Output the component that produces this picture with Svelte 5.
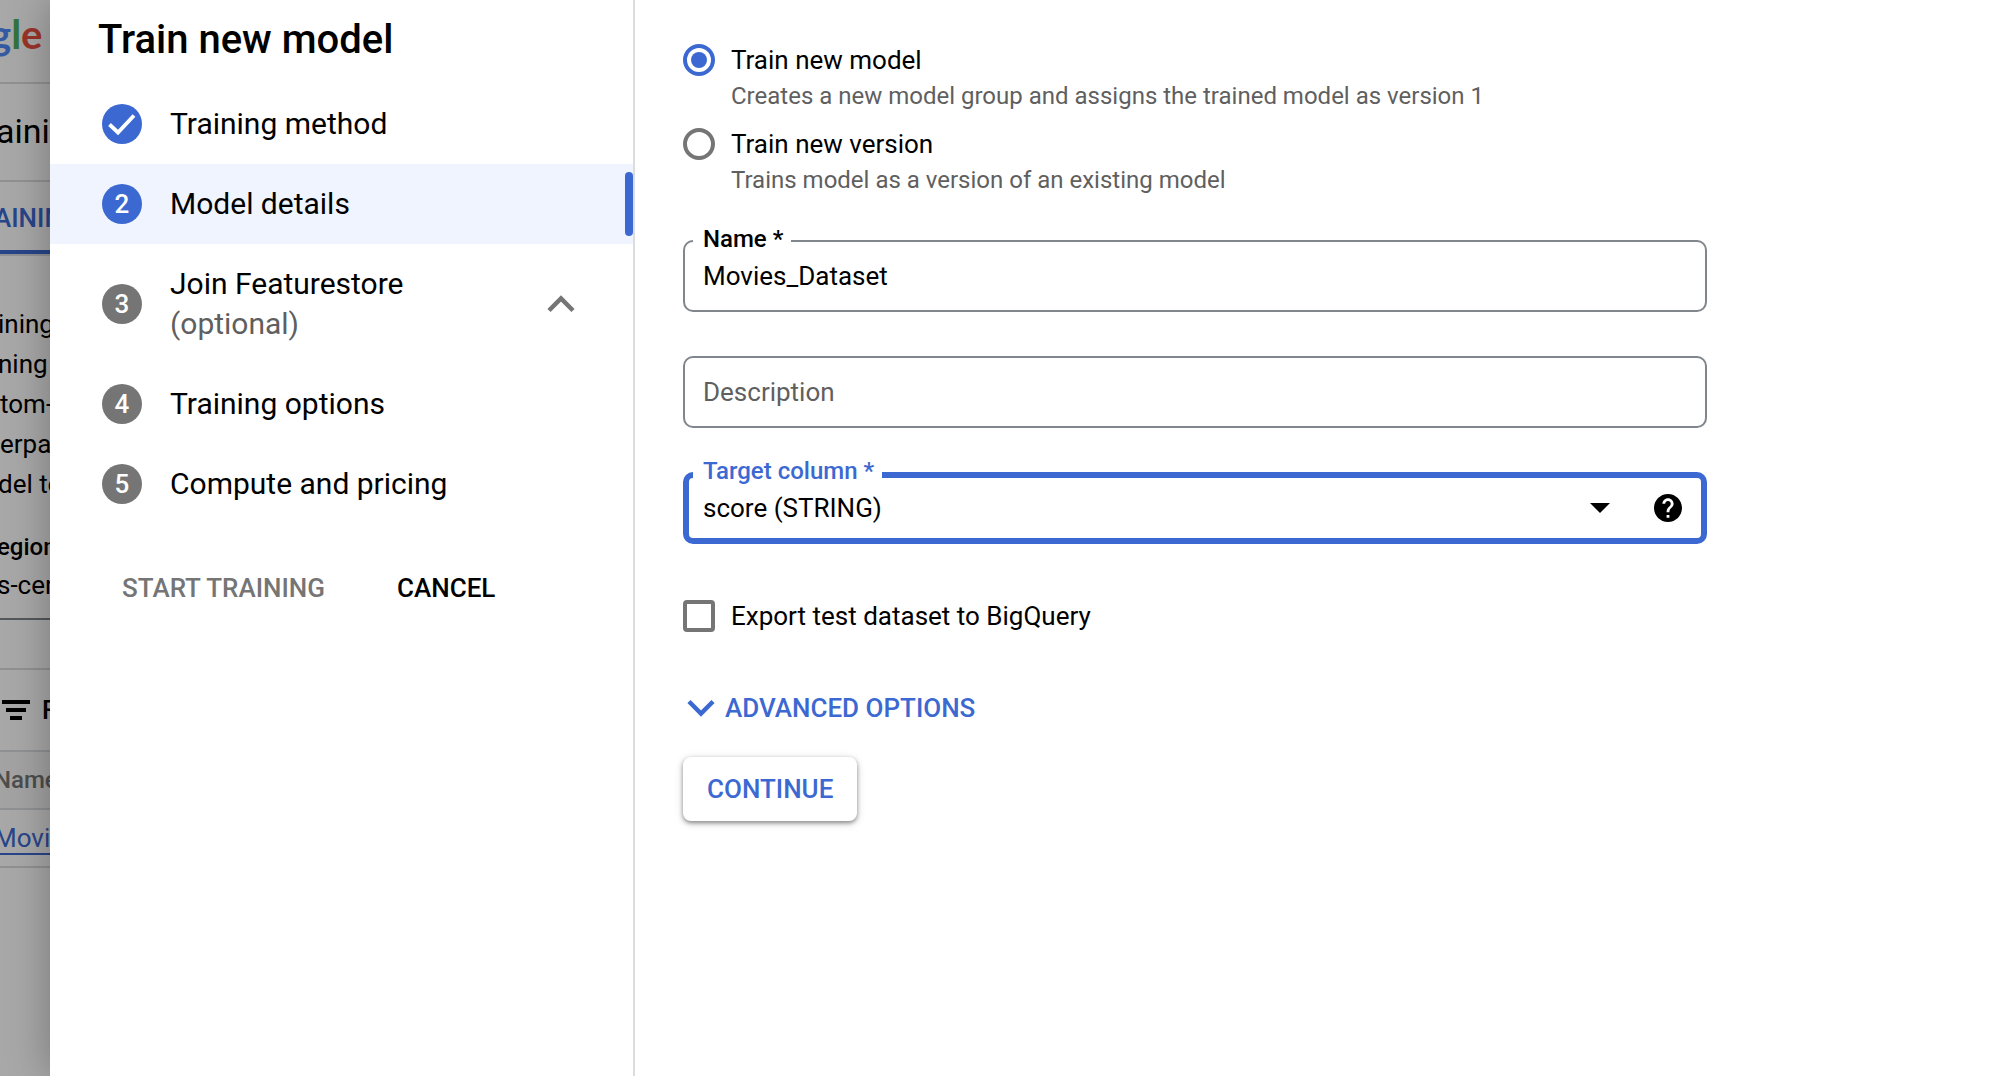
<script>
  const steps = [
    { label: 'Training method', done: true },
    { label: 'Model details' },
    { label: 'Join Featurestore', note: '(optional)', expandable: true },
    { label: 'Training options' },
    { label: 'Compute and pricing' },
  ];
  const current = 1;

  let mode = $state('model');
  let name = $state('Movies_Dataset');
  let description = $state('');
  let target = $state('score (STRING)');
  let exportTest = $state(false);
</script>

<div class="shell">
  <div class="page">
    <header class="brand"><span class="g">g</span><span class="l">l</span><span class="e">e</span></header>
    <h2 class="page-title">aini</h2>
    <div class="tab">AININ</div>
    <div class="intro">
      <div>ining</div>
      <div>ning</div>
      <div class="inset">tom-</div>
      <div class="inset">erpa</div>
      <div>del to</div>
    </div>
    <div class="region">
      <div class="region-label">egion</div>
      <div class="region-value">s-cen</div>
    </div>
    <div class="filter">
      <svg width="28" height="20" viewBox="0 0 28 20" aria-hidden="true">
        <path d="M0 0h28v4H0zM4 8h20v4H4zM8 16h12v4H8z" />
      </svg>
      <span>F</span>
    </div>
    <div class="column-head">Name</div>
    <div class="row"><a href="#movies">Movie</a></div>
  </div>

  <div class="drawer">
    <nav class="side" aria-label="Steps">
      <h1>Train new model</h1>
      <ol>
        {#each steps as step, i}
          <li class:current={i === current}>
            <button class="step" aria-current={i === current ? 'step' : undefined}>
              <span class="badge" class:active={i <= current}>
                {#if step.done}
                  <svg width="40" height="40" viewBox="0 0 40 40" aria-hidden="true">
                    <path d="M7.500 20.500l8.500 8L32 11.500" fill="none" stroke="#fff" stroke-width="3.800" />
                  </svg>
                {:else}
                  {i + 1}
                {/if}
              </span>
              <span class="step-text">
                {step.label}
                {#if step.note}<span class="note">{step.note}</span>{/if}
              </span>
            </button>
            {#if step.expandable}
              <button class="toggle" aria-label="Collapse">
                <svg width="28" height="18" viewBox="0 0 28 18" aria-hidden="true">
                  <path d="M2 15.500L14 3.500l12 12" fill="none" stroke="#757575" stroke-width="4.500" />
                </svg>
              </button>
            {/if}
          </li>
        {/each}
      </ol>
      <div class="actions">
        <button class="text-button" disabled>START TRAINING</button>
        <button class="text-button">CANCEL</button>
      </div>
    </nav>

    <main>
      <form onsubmit={(e) => e.preventDefault()}>
        <div class="choices" role="radiogroup" aria-label="Training target">
          <label class="choice">
            <input type="radio" name="mode" value="model" bind:group={mode} />
            <span>Train new model</span>
            <span class="hint">Creates a new model group and assigns the trained model as version 1</span>
          </label>
          <label class="choice">
            <input type="radio" name="mode" value="version" bind:group={mode} />
            <span>Train new version</span>
            <span class="hint">Trains model as a version of an existing model</span>
          </label>
        </div>

        <div class="field">
          <label for="name">Name *</label>
          <input id="name" type="text" bind:value={name} />
        </div>

        <div class="field">
          <input type="text" placeholder="Description" aria-label="Description" bind:value={description} />
        </div>

        <div class="field focused">
          <label for="target">Target column *</label>
          <select id="target" bind:value={target}>
            <option>score (STRING)</option>
          </select>
          <svg class="caret" width="20" height="10" viewBox="0 0 20 10" aria-hidden="true">
            <path d="M0 0h20L10 10z" />
          </svg>
          <button type="button" class="help" aria-label="Help">
            <svg width="28" height="28" viewBox="2 2 20 20" aria-hidden="true">
              <path d="M12 2C6.480 2 2 6.480 2 12s4.480 10 10 10 10-4.480 10-10S17.520 2 12 2zm1 17h-2v-2h2v2zm2.070-7.750l-.9.920C13.450 12.900 13 13.500 13 15h-2v-.5c0-1.100.45-2.100 1.170-2.830l1.240-1.260c.37-.36.590-.86.590-1.410 0-1.100-.9-2-2-2s-2 .9-2 2H8c0-2.210 1.790-4 4-4s4 1.790 4 4c0 .88-.36 1.680-.93 2.250z" />
            </svg>
          </button>
        </div>

        <label class="check">
          <input type="checkbox" bind:checked={exportTest} />
          <span>Export test dataset to BigQuery</span>
        </label>

        <button type="button" class="advanced">
          <svg width="28" height="18" viewBox="0 0 28 18" aria-hidden="true">
            <path d="M2 2.500l12 12 12-12" fill="none" stroke="#3c69d1" stroke-width="4.500" />
          </svg>
          ADVANCED OPTIONS
        </button>

        <button class="continue">CONTINUE</button>
      </form>
    </main>
  </div>
</div>

<style>
  :global(body) {
    margin: 0;
    background: #fff;
    font-family: Roboto, 'Liberation Sans', sans-serif;
    font-size: 26px;
    line-height: 36px;
    color: #000;
  }

  h1, h2 { margin: 0; font-weight: 500; }
  ol { margin: 0; padding: 0; list-style: none; }
  button, input, select { font: inherit; color: inherit; }
  button { margin: 0; padding: 0; border: 0; background: none; text-align: left; }
  svg { display: block; flex: none; }

  .shell {
    display: grid;
    grid-template-columns: 50px minmax(0, 1fr);
    min-height: 100vh;
  }

  /* Page left visible behind the drawer */
  .page {
    overflow: hidden;
    position: relative;
    background: #fff;
    white-space: nowrap;
    text-indent: -6px;
  }
  .page::after {
    content: '';
    position: absolute;
    inset: 0;
    background: rgba(0, 0, 0, 0.34);
  }
  .page > * { box-sizing: border-box; }
  .brand {
    height: 84px;
    padding-top: 10px;
    border-bottom: 2px solid #dadce0;
    font-family: Lato, sans-serif;
    font-size: 40px;
    font-weight: 700;
    line-height: 48px;
    text-indent: -10px;
  }
  .g { color: #4f8af5; }
  .l { color: #4fae5b; }
  .e { color: #e94f3e; }
  .page-title {
    height: 98px;
    border-bottom: 2px solid #dadce0;
    font-size: 34px;
    font-weight: 400;
    line-height: 94px;
    text-indent: -4px;
  }
  .tab {
    height: 74px;
    border-bottom: 2px solid #dadce0;
    box-shadow: inset 0 -4px #3c69d1;
    color: #3c69d1;
    font-weight: 500;
    line-height: 72px;
  }
  .intro {
    padding-top: 48px;
    line-height: 40px;
    text-indent: -2px;
  }
  .inset { text-indent: 0; }
  .region {
    height: 116px;
    padding-top: 24px;
    border-bottom: 2px solid #80868b;
    text-indent: -3px;
  }
  .region-label { font-size: 24px; font-weight: 500; line-height: 38px; }
  .region-value { line-height: 38px; }
  .filter {
    display: flex;
    align-items: center;
    gap: 12px;
    height: 84px;
    margin-top: 48px;
    padding-left: 2px;
    border: solid #dadce0;
    border-width: 2px 0;
    font-weight: 500;
    text-indent: 0;
  }
  .column-head {
    height: 58px;
    border-bottom: 2px solid #dadce0;
    background: #f7f7f7;
    color: #757575;
    font-size: 24px;
    font-weight: 500;
    line-height: 56px;
  }
  .row {
    height: 58px;
    padding-top: 12px;
    border-bottom: 2px solid #dadce0;
  }
  .row a {
    display: block;
    height: 31px;
    border-bottom: 2px solid #3c69d1;
    color: #3c69d1;
    line-height: 32px;
    text-decoration: none;
  }

  .drawer {
    position: relative;
    display: grid;
    grid-template-columns: 585px minmax(0, 1fr);
    background: #fff;
    box-shadow: 0 0 40px rgba(0, 0, 0, 0.3);
  }

  .side {
    box-sizing: border-box;
    border-right: 2px solid #dadce0;
  }
  h1 {
    padding: 16px 48px 20px;
    font-size: 40px;
    line-height: 48px;
  }
  li {
    position: relative;
    display: flex;
    align-items: center;
    padding: 20px 58px 20px 52px;
  }
  .current { background: #f0f4fe; }
  .current::after {
    content: '';
    position: absolute;
    inset: 8px 0 8px auto;
    width: 8px;
    border-radius: 4px;
    background: #3c69d1;
  }
  .step {
    flex: 1;
    display: flex;
    align-items: center;
    gap: 28px;
    font-size: 30px;
    line-height: 40px;
  }
  .badge {
    flex: none;
    width: 40px;
    height: 40px;
    border-radius: 50%;
    background: #757575;
    color: #fff;
    font-size: 26px;
    font-weight: 500;
    text-align: center;
  }
  .badge.active { background: #3c69d1; }
  .note { display: block; color: #5f5f5f; }

  .actions {
    display: flex;
    gap: 24px;
    padding: 32px 48px;
  }
  .text-button {
    padding: 14px 24px;
    font-weight: 500;
    white-space: nowrap;
  }
  .text-button:disabled { color: #757575; }

  main { padding: 42px 48px; }
  form {
    display: flex;
    flex-direction: column;
    align-items: flex-start;
    max-width: 1024px;
  }
  .choices { margin-bottom: 30px; }
  .choice {
    display: grid;
    grid-template-columns: 32px 1fr;
    column-gap: 16px;
    align-items: center;
    margin-bottom: 12px;
  }
  .hint {
    grid-column: 2;
    color: #5f5f5f;
    font-size: 24px;
  }
  input[type='radio'],
  input[type='checkbox'] {
    appearance: none;
    box-sizing: border-box;
    flex: none;
    width: 32px;
    height: 32px;
    margin: 0;
    border: 4px solid #757575;
    border-radius: 50%;
  }
  input[type='radio']:checked {
    border-color: #3c69d1;
    padding: 4px;
    background: #3c69d1 content-box;
  }
  input[type='checkbox'] { border-radius: 4px; }
  input[type='checkbox']:checked { background: #3c69d1; }

  .field {
    position: relative;
    display: flex;
    align-items: center;
    width: 100%;
    margin-bottom: 44px;
  }
  .field label {
    position: absolute;
    top: -15px;
    left: 10px;
    padding: 0 8px 0 10px;
    background: #fff;
    font-size: 24px;
    font-weight: 500;
    line-height: 28px;
  }
  .field input,
  .field select {
    appearance: none;
    box-sizing: border-box;
    width: 100%;
    height: 72px;
    margin: 0;
    padding: 0 18px;
    border: 2px solid #80868b;
    border-radius: 10px;
    outline: 0;
    background: #fff;
  }
  .field input::placeholder { color: #5f5f5f; opacity: 1; }
  .focused label { color: #3c69d1; }
  .field.focused select {
    padding: 0 120px 0 14px;
    border: 6px solid #3c69d1;
  }
  .caret {
    position: absolute;
    right: 97px;
    pointer-events: none;
  }
  .help {
    position: absolute;
    right: 25px;
  }

  .check {
    display: flex;
    align-items: center;
    gap: 16px;
    margin-top: 10px;
  }
  .advanced {
    display: flex;
    align-items: center;
    gap: 10px;
    margin-top: 56px;
    padding-left: 4px;
    color: #3c69d1;
    font-weight: 500;
  }
  .continue {
    margin-top: 31px;
    padding: 14px 24px;
    border-radius: 8px;
    background: #fff;
    color: #3c69d1;
    font-weight: 500;
    box-shadow: 0 2px 4px rgba(0, 0, 0, 0.4), 0 2px 10px rgba(0, 0, 0, 0.15);
  }
</style>
